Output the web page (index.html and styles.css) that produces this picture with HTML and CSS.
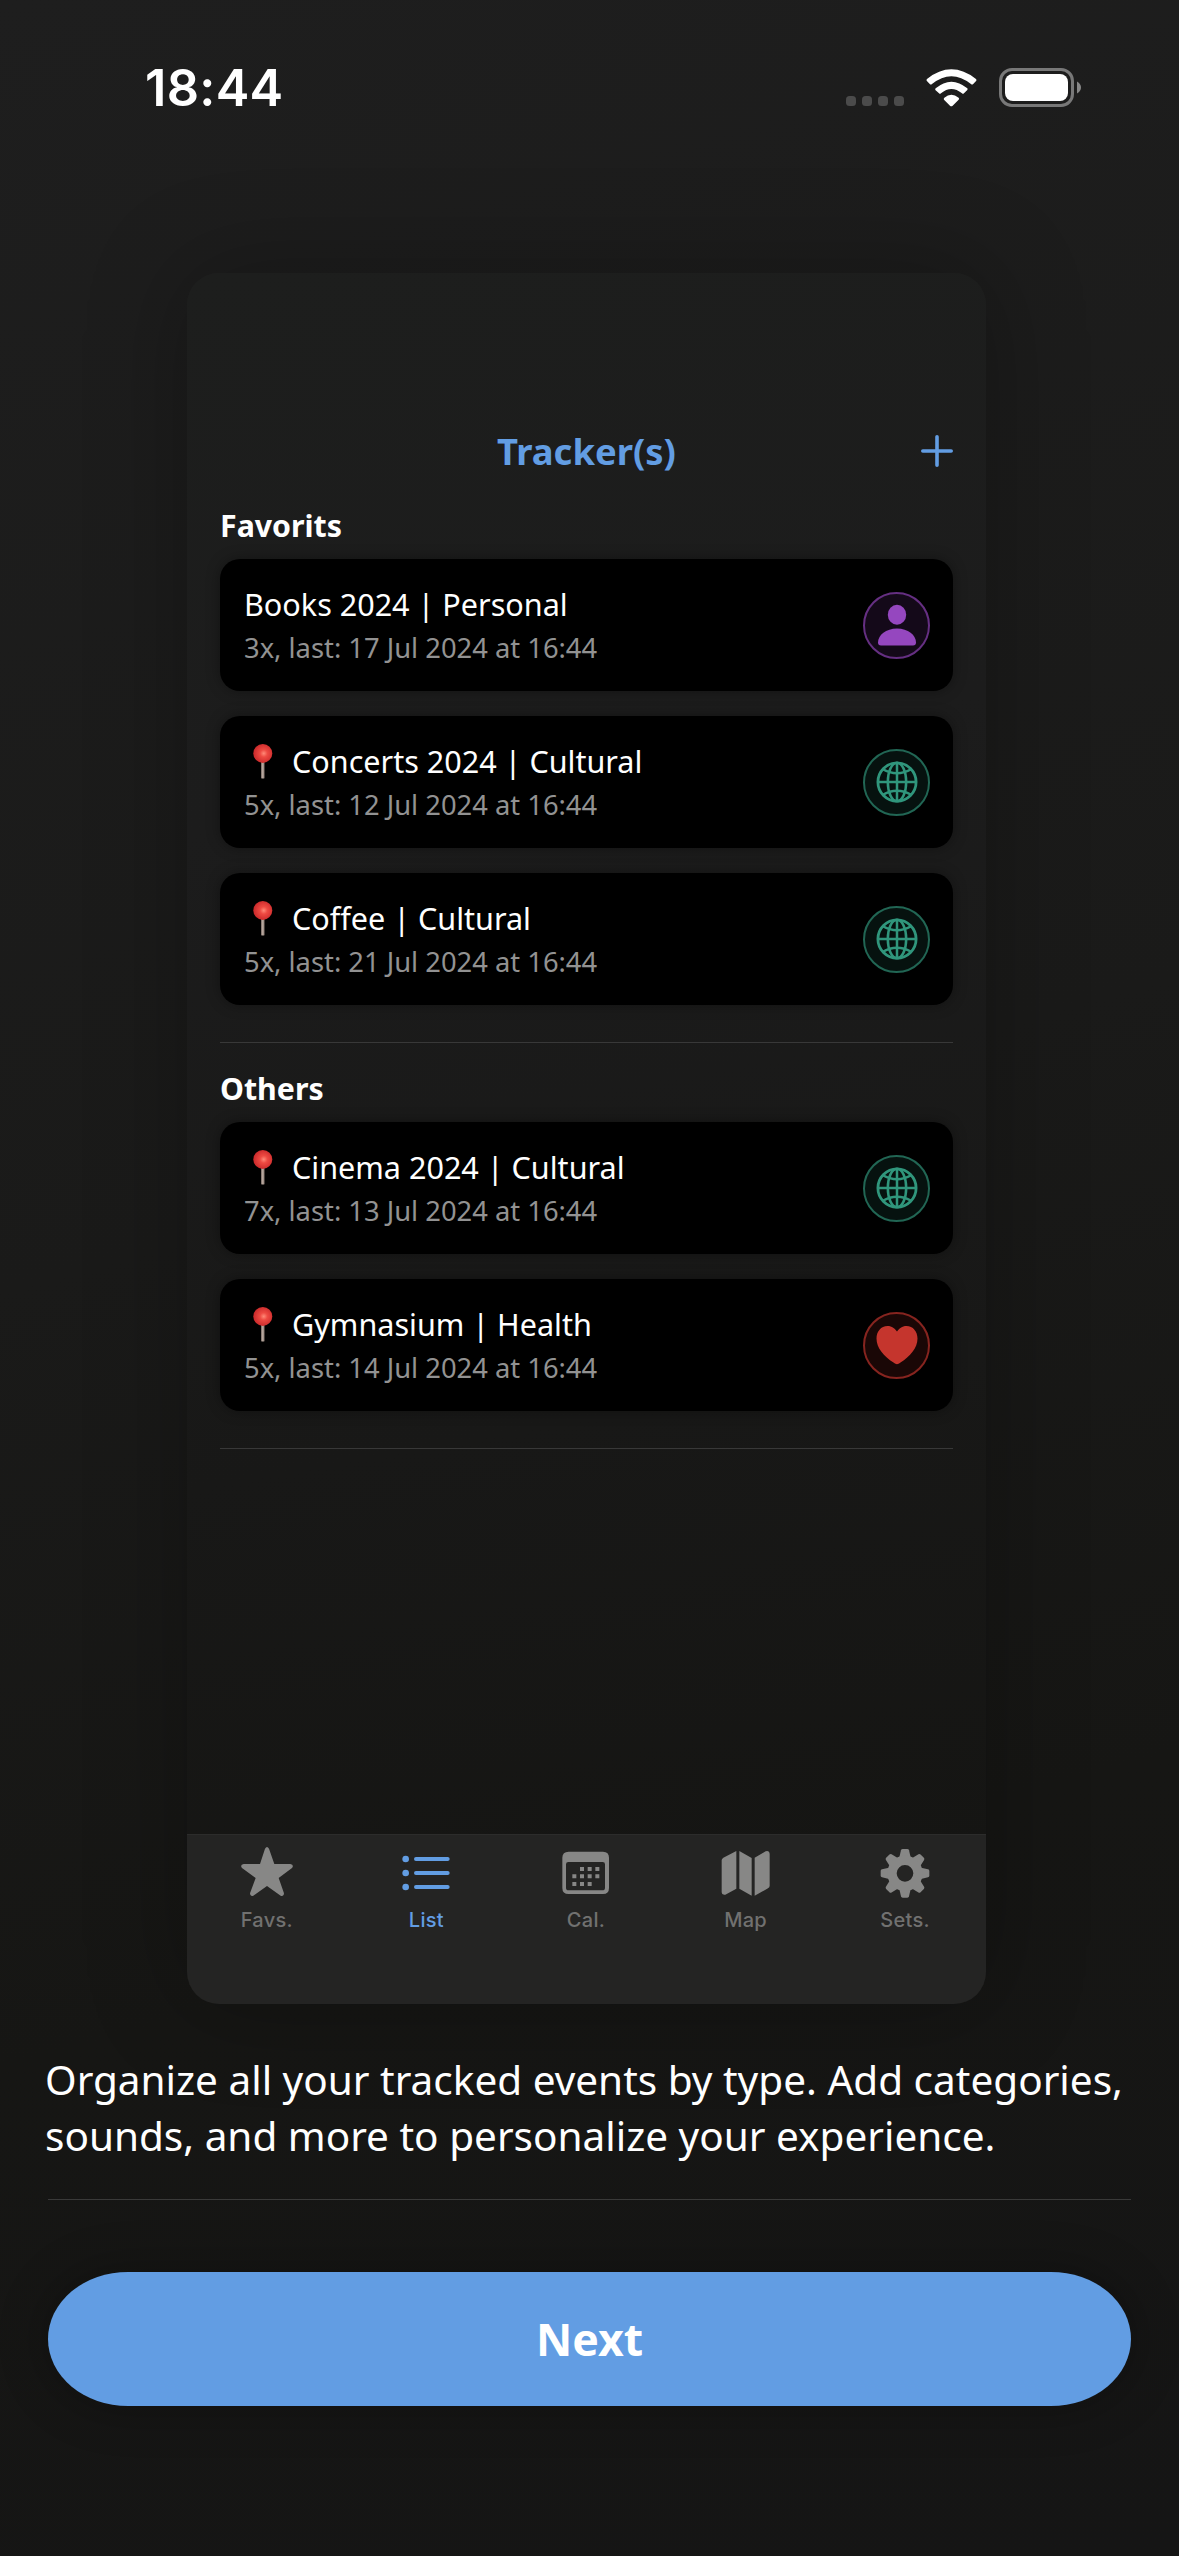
FILE: index.html
```html
<!DOCTYPE html>
<html lang="en">
<head>
<meta charset="utf-8">
<title>Tracker onboarding</title>
<link rel="stylesheet" href="styles.css">
</head>
<body>
<svg width="0" height="0" class="defs" aria-hidden="true">
  <defs>
    <radialGradient id="pinHead" cx="0.55" cy="0.5" r="0.55">
      <stop offset="0" stop-color="#ff8a78"/><stop offset="0.35" stop-color="#ee4a42"/><stop offset="1" stop-color="#c9282a"/>
    </radialGradient>
    <linearGradient id="pinStem" x1="0" x2="1" y1="0" y2="0">
      <stop offset="0" stop-color="#6f625c"/><stop offset="0.5" stop-color="#c4b3a9"/><stop offset="1" stop-color="#6f625c"/>
    </linearGradient>
  </defs>
  <symbol id="pin" viewBox="0 0 38 42">
    <rect x="17" y="20" width="3.6" height="18.6" rx="1.2" fill="url(#pinStem)"/>
    <circle cx="18.800" cy="13.400" r="9.500" fill="url(#pinHead)"/>
  </symbol>
  <symbol id="globe" viewBox="-22 -22 44 44">
    <g fill="none" stroke="currentColor" stroke-width="2.5">
      <circle r="19.1" stroke-width="2.8"/>
      <path d="M-20 0H20M0-20V20"/>
      <ellipse rx="9.2" ry="19.3"/>
      <path d="M-14.5-13Q0-4.500 14.500-13M-14.500 13Q0 4.500 14.500 13"/>
    </g>
  </symbol>
</svg>
<div class="screen">
  <header class="status">
    <span class="time">18:44</span>
    <div class="indicators">
      <div class="dots"><i></i><i></i><i></i><i></i></div>
      <svg class="wifi" viewBox="318 86 154 114" fill="#fff">
        <path d="M321 116Q394 58 468 116Q470 118 469 121L459 132Q456 134 453 131Q394 84 336 131Q333 134 330 132L320 121Q319 118 321 116Z"/>
        <path d="M347 144Q394 104 442 144Q444 146 442 149L432 159Q429 162 426 159Q394 133 363 159Q360 162 357 159L346 149Q345 146 347 144Z"/>
        <path d="M373 172Q394 155 416 172Q419 175 416 178L398 196Q394 200 390 196L372 178Q370 175 373 172Z"/>
      </svg>
      <svg class="battery" viewBox="0 0 83 39">
        <rect x="1.500" y="1.500" width="72" height="36" rx="11.500" fill="none" stroke="#787878" stroke-width="3"/>
        <rect x="6" y="6" width="63" height="27" rx="8" fill="#fff"/>
        <path d="M78 13.500Q82 16 82 19.500T78 25.500Z" fill="#878787"/>
      </svg>
    </div>
  </header>

  <main class="phone">
    <div class="content">
      <div class="topbar">
        <h1>Tracker(s)</h1>
        <svg class="plus" viewBox="0 0 32 32"><path d="M16 1.800V30.200M1.800 16H30.200" stroke="#629de3" stroke-width="3.600" stroke-linecap="round"/></svg>
      </div>
      <section>
        <h2>Favorits</h2>
        <div class="cards">
          <article class="card">
            <div><h3><span>Books 2024 | Personal</span></h3><p>3x, last: 17 Jul 2024 at 16:44</p></div>
            <div class="badge purple"><svg viewBox="-22 -22 44 44" fill="currentColor"><ellipse cx="0" cy="-10.200" rx="9.200" ry="10"/><path d="M-19 17.500C-19 10-11 3.500 0 3.500S19 10 19 17.500Q19 20.500 16 20.500H-16Q-19 20.500-19 17.500Z"/></svg></div>
          </article>
          <article class="card">
            <div><h3><svg class="pin"><use href="#pin"/></svg><span>Concerts 2024 | Cultural</span></h3><p>5x, last: 12 Jul 2024 at 16:44</p></div>
            <div class="badge green"><svg><use href="#globe"/></svg></div>
          </article>
          <article class="card">
            <div><h3><svg class="pin"><use href="#pin"/></svg><span>Coffee | Cultural</span></h3><p>5x, last: 21 Jul 2024 at 16:44</p></div>
            <div class="badge green"><svg><use href="#globe"/></svg></div>
          </article>
        </div>
      </section>
      <section>
        <h2>Others</h2>
        <div class="cards">
          <article class="card">
            <div><h3><svg class="pin"><use href="#pin"/></svg><span>Cinema 2024 | Cultural</span></h3><p>7x, last: 13 Jul 2024 at 16:44</p></div>
            <div class="badge green"><svg><use href="#globe"/></svg></div>
          </article>
          <article class="card">
            <div><h3><svg class="pin"><use href="#pin"/></svg><span>Gymnasium | Health</span></h3><p>5x, last: 14 Jul 2024 at 16:44</p></div>
            <div class="badge red"><svg viewBox="-22 -22 44 44" fill="currentColor"><path d="M0 19.200C-1 19.200-2 18.500-3.500 17.500C-13 11.500-20.500 3-20.500-6.500C-20.500-13.500-16-19-9.500-19C-5-19-2-16.500 0-13.500C2-16.500 5-19 9.500-19C16-19 20.500-13.500 20.500-6.500C20.500 3 13 11.500 3.500 17.500C2 18.500 1 19.200 0 19.200Z"/></svg></div>
          </article>
        </div>
      </section>
    </div>
    <nav class="tabs">
      <div class="tab">
        <svg viewBox="171 72 180 180" fill="currentColor"><path d="M255 86Q261 76 267 86L283 132H331Q343 135 336 144L296 174L312 220Q312 231 302 227L261 198L220 227Q210 231 210 220L227 174L186 144Q179 135 191 132H240Z"/></svg>
        <span>Favs.</span>
      </div>
      <div class="tab active">
        <svg viewBox="648 72 180 180" fill="currentColor"><circle cx="677" cy="117" r="10"/><circle cx="677" cy="159" r="10"/><circle cx="677" cy="201" r="10"/><path d="M708 117H803M708 159H803M708 201H803" stroke="currentColor" stroke-width="12" stroke-linecap="round"/></svg>
        <span>List</span>
      </div>
      <div class="tab">
        <svg viewBox="1128 72 180 180" fill="currentColor"><path fill-rule="evenodd" d="M1166 95H1269Q1287 95 1287 113V204Q1287 222 1269 222H1166Q1147 222 1147 204V113Q1147 95 1166 95ZM1165 126Q1158 126 1158 133V203Q1158 211 1166 211H1267Q1275 211 1275 203V133Q1275 126 1268 126Z"/><path d="M1200 147H1258" stroke="currentColor" stroke-width="12" stroke-dasharray="12 11"/><path d="M1177 169H1258" stroke="currentColor" stroke-width="12" stroke-dasharray="12 11"/><path d="M1177 192H1235" stroke="currentColor" stroke-width="12" stroke-dasharray="12 11"/></svg>
        <span>Cal.</span>
      </div>
      <div class="tab">
        <svg viewBox="346 72 180 180" fill="currentColor"><path d="M407 93V206L374 224Q363 226 363 217V121Q363 116 368 113ZM416 93L453 114V227L416 206ZM462 113L495 94Q507 91 507 101V197Q507 202 502 205L462 227Z"/></svg>
        <span>Map</span>
      </div>
      <div class="tab">
        <svg viewBox="-90 -88 180 180" fill="currentColor"><path d="M-17-48L-12-69Q-11-73-7-73H7Q11-73 12-69L17-48Z" id="tooth"/><use href="#tooth" transform="rotate(45)"/><use href="#tooth" transform="rotate(90)"/><use href="#tooth" transform="rotate(135)"/><use href="#tooth" transform="rotate(180)"/><use href="#tooth" transform="rotate(225)"/><use href="#tooth" transform="rotate(270)"/><use href="#tooth" transform="rotate(315)"/><circle r="39" fill="none" stroke="currentColor" stroke-width="28"/></svg>
        <span>Sets.</span>
      </div>
    </nav>
  </main>

  <p class="copy">Organize all your tracked events by type. Add categories,<br>sounds, and more to personalize your experience.</p>
  <footer class="footer"><button class="next">Next</button></footer>
</div>
</body>
</html>
```

FILE: styles.css
```css
* { box-sizing: border-box; margin: 0; padding: 0; }

body {
  width: 1179px;
  height: 2556px;
  overflow: hidden;
  background: #161614;
  font-family: "Noto Sans", sans-serif;
  color: #fff;
}

.defs { position: absolute; }

.screen {
  width: 1179px;
  height: 2556px;
  display: flex;
  flex-direction: column;
  background: linear-gradient(165deg, #1e1e1e 0%, #1a1a19 45%, #161614 72%, #151515 100%);
}

.status {
  height: 273px;
  flex: none;
  display: flex;
  justify-content: space-between;
  align-items: flex-start;
  padding: 58px 97px 0 145px;
}

.time {
  font: 600 50.500px/60px Inter, sans-serif;
  letter-spacing: 0.300px;
}

.indicators { display: flex; align-items: flex-end; padding-top: 10px; }
.dots { display: flex; gap: 6px; margin: 0 22px 1px 0; }
.dots i { width: 10px; height: 10px; border-radius: 3.500px; background: #4b4b4b; }
.wifi { width: 51.300px; height: 38px; margin-right: 22px; }
.battery { width: 83px; height: 39px; }

.phone {
  width: 799px;
  height: 1731px;
  flex: none;
  margin-left: 187px;
  display: flex;
  flex-direction: column;
  border-radius: 32px;
  overflow: hidden;
  background: linear-gradient(170deg, #1d1e1d 0%, #1c1c1c 30%, #181817 65%, #151513 92%);
  box-shadow: 0 0 100px rgba(0, 0, 0, 0.28);
}

.content { height: 1561px; padding: 153px 33px 0; }

.topbar {
  height: 50px;
  margin-bottom: 30px;
  display: grid;
  grid-template-columns: 32px 1fr 32px;
  align-items: center;
}
.topbar h1 {
  grid-column: 2;
  text-align: center;
  font-size: 36.400px;
  line-height: 50px;
  color: #629de3;
}
.plus { width: 32px; height: 32px; }

section {
  border-bottom: 1px solid #383838;
  padding-bottom: 37px;
  margin-bottom: 26px;
}
h2 { font-size: 30.300px; line-height: 40px; margin-bottom: 13px; }
.cards { display: flex; flex-direction: column; gap: 25px; }

.card {
  height: 132px;
  padding: 0 23px 0 24px;
  display: flex;
  justify-content: space-between;
  align-items: center;
  background: #000;
  border-radius: 20px;
  box-shadow: 0 0 14px rgba(0, 0, 0, 0.35);
}
.card h3 {
  display: flex;
  font-size: 30.550px;
  line-height: 42px;
  font-weight: 400;
  margin: -1px 0 4px;
}
.card p { font-size: 27.350px; line-height: 38px; color: #929292; }
.pin { width: 38px; height: 42px; margin-right: 10px; }

.badge {
  width: 67px;
  height: 67px;
  border: 2px solid;
  border-radius: 50%;
  display: grid;
  place-items: center;
}
.badge svg { width: 44px; height: 44px; }
.purple { color: #9547bf; border-color: #652f82; background: #140919; }
.green { color: #30967c; border-color: #216654; background: #06120f; }
.red { color: #c5352d; border-color: #86241f; background: #1a0706; }

.tabs {
  flex: 1;
  display: flex;
  padding: 9px 1px 0 0;
  background: #242423;
  border-top: 1px solid #2c2c2b;
}
.tab {
  flex: 1;
  display: flex;
  flex-direction: column;
  align-items: center;
  font: 500 20px/24px Inter, sans-serif;
  letter-spacing: 0.300px;
  color: #717170;
}
.tab svg { width: 60px; height: 60px; color: #878786; margin-bottom: 4px; }
.tab.active, .tab.active svg { color: #629de3; }

.copy {
  margin: 48px 0 0 45px;
  font-size: 40.500px;
  line-height: 56.300px;
  white-space: nowrap;
}

.footer {
  margin: 34px 48px 0;
  border-top: 1px solid #3a3a39;
  padding-top: 72px;
}
.next {
  display: block;
  width: 100%;
  height: 134px;
  border: 0;
  border-radius: 80px / 67px;
  background: #629de3;
  color: #fff;
  font: 700 44.600px/60px "Noto Sans", sans-serif;
  box-shadow: 0 0 50px rgba(0, 0, 0, 0.3);
}
```
